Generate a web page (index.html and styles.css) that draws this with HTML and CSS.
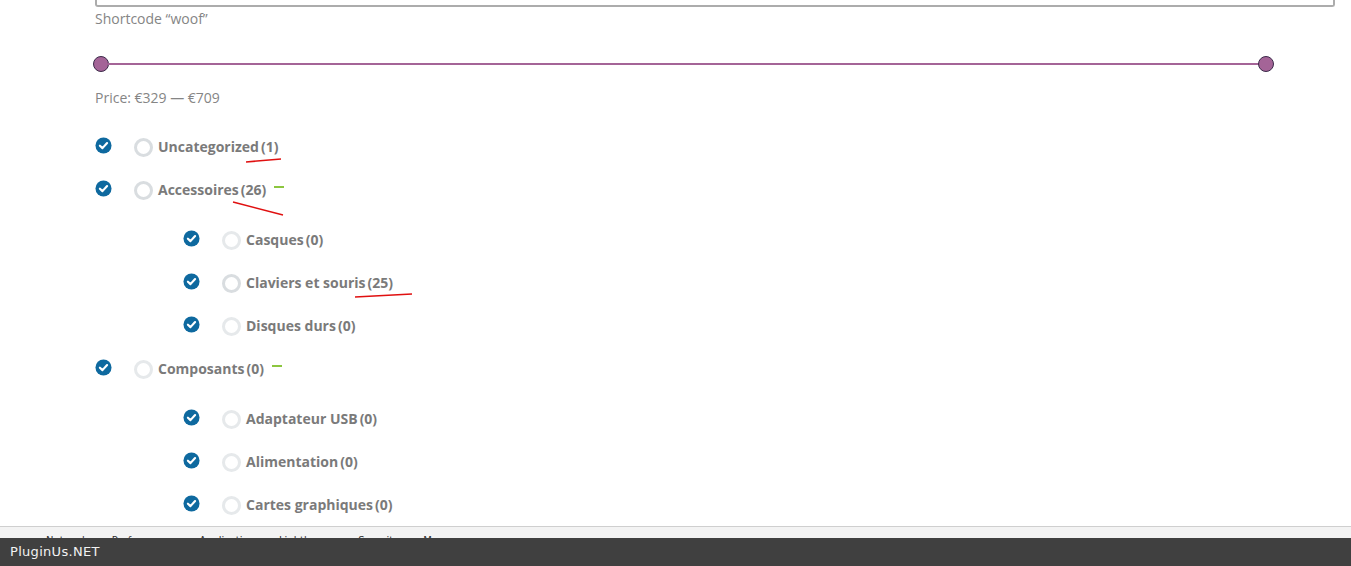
FILE: index.html
```html
<!DOCTYPE html>
<html lang="en">
<head>
  <meta charset="UTF-8">
  <meta name="viewport" content="width=device-width, initial-scale=1.0">
  <title>WOOF filter</title>
  <link rel="stylesheet" href="styles.css">
</head>
<body>
  <div class="container">
    <div class="search-box"></div>
    <p class="note">Shortcode “woof”</p>

    <div class="price-slider">
      <span class="handle"></span>
      <span class="track"></span>
      <span class="handle"></span>
    </div>
    <p class="note price">Price: €329 — €709</p>

    <ul class="cats">
      <li>
        <div class="row">
          <svg class="check" viewBox="0 0 18 18"><circle cx="9" cy="9" r="8.5"/><path d="M5.2 9.2 L7.9 11.8 L12.8 6.4"/></svg>
          <span class="radio"></span>
          <label>Uncategorized</label><span class="count">(1)</span>
        </div>
      </li>
      <li>
        <div class="row">
          <svg class="check" viewBox="0 0 18 18"><circle cx="9" cy="9" r="8.5"/><path d="M5.2 9.2 L7.9 11.8 L12.8 6.4"/></svg>
          <span class="radio"></span>
          <label>Accessoires</label><span class="count">(26)</span><span class="toggle"></span>
        </div>
        <ul class="cats child">
          <li>
            <div class="row">
              <svg class="check" viewBox="0 0 18 18"><circle cx="9" cy="9" r="8.5"/><path d="M5.2 9.2 L7.9 11.8 L12.8 6.4"/></svg>
              <span class="radio light"></span>
              <label>Casques</label><span class="count">(0)</span>
            </div>
          </li>
          <li>
            <div class="row">
              <svg class="check" viewBox="0 0 18 18"><circle cx="9" cy="9" r="8.5"/><path d="M5.2 9.2 L7.9 11.8 L12.8 6.4"/></svg>
              <span class="radio"></span>
              <label>Claviers et souris</label><span class="count">(25)</span>
            </div>
          </li>
          <li>
            <div class="row">
              <svg class="check" viewBox="0 0 18 18"><circle cx="9" cy="9" r="8.5"/><path d="M5.2 9.2 L7.9 11.8 L12.8 6.4"/></svg>
              <span class="radio light"></span>
              <label>Disques durs</label><span class="count">(0)</span>
            </div>
          </li>
        </ul>
      </li>
      <li>
        <div class="row">
          <svg class="check" viewBox="0 0 18 18"><circle cx="9" cy="9" r="8.5"/><path d="M5.2 9.2 L7.9 11.8 L12.8 6.4"/></svg>
          <span class="radio light"></span>
          <label>Composants</label><span class="count">(0)</span><span class="toggle"></span>
        </div>
        <ul class="cats child">
          <li>
            <div class="row">
              <svg class="check" viewBox="0 0 18 18"><circle cx="9" cy="9" r="8.5"/><path d="M5.2 9.2 L7.9 11.8 L12.8 6.4"/></svg>
              <span class="radio light"></span>
              <label>Adaptateur USB</label><span class="count">(0)</span>
            </div>
          </li>
          <li>
            <div class="row">
              <svg class="check" viewBox="0 0 18 18"><circle cx="9" cy="9" r="8.5"/><path d="M5.2 9.2 L7.9 11.8 L12.8 6.4"/></svg>
              <span class="radio light"></span>
              <label>Alimentation</label><span class="count">(0)</span>
            </div>
          </li>
          <li>
            <div class="row">
              <svg class="check" viewBox="0 0 18 18"><circle cx="9" cy="9" r="8.5"/><path d="M5.2 9.2 L7.9 11.8 L12.8 6.4"/></svg>
              <span class="radio light"></span>
              <label>Cartes graphiques</label><span class="count">(0)</span>
            </div>
          </li>
        </ul>
      </li>
    </ul>
  </div>

  <!-- hand-drawn marks over the list -->
  <svg class="marks" width="1351" height="566">
    <line x1="246" y1="162" x2="281" y2="159"/>
    <line x1="233" y1="202" x2="283" y2="215"/>
    <line x1="355" y1="297" x2="412" y2="294"/>
  </svg>

  <div class="bottom">
    <div class="devtools">
      <span>Network</span><span>Performance</span><span>Application</span><span>Lighthouse</span><span>Security</span><span>Memory</span>
    </div>
    <div class="brand">PluginUs.NET</div>
  </div>
</body>
</html>
```

FILE: styles.css
```css
html, body {
  height: 100%;
}

body {
  margin: 0;
  background: #ffffff;
  font-family: "Open Sans", Arial, sans-serif;
  overflow: hidden;
}

.container {
  padding: 0 16px 0 95px;
}

.search-box {
  width: 1236px;
  height: 5px;
  border: 2px solid #acacac;
  border-top: none;
  border-radius: 0 0 3px 3px;
}

.note {
  margin: 0;
  font-size: 14px;
  line-height: 20px;
  color: #858585;
}

.container > .note:first-of-type {
  margin-top: 2px;
}

.price-slider {
  display: flex;
  align-items: center;
  width: 1181px;
  height: 16px;
  margin: 27px 0 0 -2px;
}

.handle {
  flex: none;
  width: 14px;
  height: 14px;
  border: 1px solid #3c2a4a;
  border-radius: 50%;
  background: #a46497;
}

.track {
  flex: 1;
  height: 2px;
  background: #a46497;
  margin: 0 -1px;
}

.price {
  margin-top: 16px;
}

.cats {
  list-style: none;
  margin: 17px 0 0;
  padding: 0;
}

.cats.child {
  margin: 7px 0 0;
  padding-left: 88px;
}

.row {
  display: flex;
  align-items: center;
  height: 43px;
}

.check {
  flex: none;
  width: 17px;
  height: 17px;
  margin-top: -2px;
}

.check circle {
  fill: #0e699f;
}

.check path {
  fill: none;
  stroke: #ffffff;
  stroke-width: 2.3;
  stroke-linecap: round;
  stroke-linejoin: round;
}

.radio {
  flex: none;
  box-sizing: border-box;
  width: 19px;
  height: 19px;
  margin: 2px 5px 0 22px;
  border: 3px solid #d9dde0;
  border-radius: 50%;
}

.radio.light {
  border-color: #e6e9eb;
}

label {
  font-size: 14px;
  font-weight: bold;
  color: #7a7a7a;
}

.count {
  margin-left: 2px;
  font-size: 14px;
  font-weight: bold;
  color: #7a7a7a;
}

.toggle {
  width: 10px;
  height: 2px;
  margin: -5px 0 0 8px;
  background: #8cc63f;
}

.marks {
  position: absolute;
  left: 0;
  top: 0;
  pointer-events: none;
}

.marks line {
  stroke: #e01010;
  stroke-width: 1.6;
}

.bottom {
  position: fixed;
  left: 0;
  right: 0;
  bottom: 0;
}

.devtools {
  height: 11px;
  overflow: hidden;
  border-top: 1px solid #cfcfcf;
  background: #f3f3f3;
  padding-left: 46px;
}

.devtools span {
  display: inline-block;
  margin-right: 24px;
  padding-top: 7px;
  font-family: "DejaVu Sans", sans-serif;
  font-size: 10px;
  line-height: 12px;
  color: #333333;
}

.brand {
  height: 28px;
  padding-left: 10px;
  background: #404040;
  color: #f2f2f2;
  font-family: "DejaVu Sans", sans-serif;
  font-size: 13px;
  letter-spacing: 0.3px;
  line-height: 28px;
}
```
